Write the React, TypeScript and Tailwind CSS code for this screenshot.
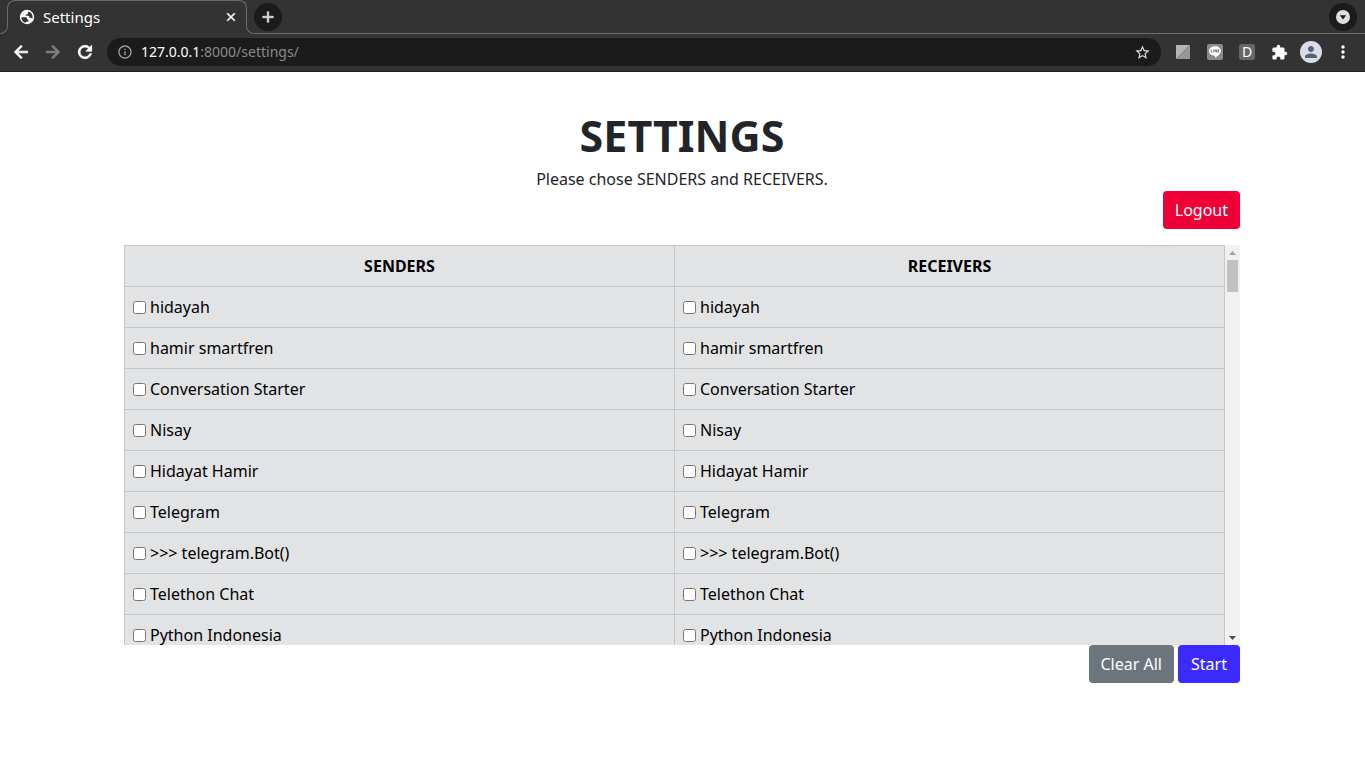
import { useRef, useState } from "react";
import type { ReactNode } from "react";
import {
  MdAdd,
  MdArrowBack,
  MdArrowForward,
  MdClose,
  MdExtension,
  MdInfoOutline,
  MdMoreVert,
  MdPerson,
  MdRefresh,
  MdStarBorder,
} from "react-icons/md";

const CONTACTS = [
  "hidayah",
  "hamir smartfren",
  "Conversation Starter",
  "Nisay",
  "Hidayat Hamir",
  "Telegram",
  ">>> telegram.Bot()",
  "Telethon Chat",
  "Python Indonesia",
];

function GlobeIcon() {
  return (
    <svg viewBox="0 0 16 16" className="size-4 shrink-0" aria-hidden="true">
      <circle cx="8" cy="8" r="7.2" fill="#fff" />
      <path
        d="M2.300 8.200h4.100c1.200 0 1.700.7 1.700 1.700v.6h1.300v1.400c0 .5-.3.8-.8.8H6.900v1.100C4.300 13.300 2.400 11 2.300 8.200zM9.500 2.500c2.500.8 4.100 3 4.100 5.500 0 .8-.2 1.500-.5 2.200-.4-.9-1-1.400-1.900-1.400h-.9V7.600c0-.5-.3-.8-.8-.8H6.700V5.500h1.200c.6 0 .9-.3.900-.8V3.800c.4-.2.700-.7.700-1.300z"
        fill="#333"
      />
    </svg>
  );
}

function TabSearchIcon() {
  return (
    <svg viewBox="0 0 14 14" className="size-[14px]" aria-hidden="true">
      <circle cx="7" cy="7" r="7" fill="#dedede" />
      <path d="M3.800 5.200h6.400L7 9.400z" fill="#1b1b1b" />
    </svg>
  );
}

function LineIcon() {
  return (
    <svg viewBox="0 0 16 16" className="size-4" aria-hidden="true">
      <rect width="16" height="16" rx="2" fill="#8b8b8b" />
      <path
        d="M8 2.200c3.400 0 6 2.100 6 4.800 0 2.300-2.600 4.600-6 6.800v-2.100C4.600 11.700 2 9.700 2 7s2.600-4.800 6-4.800z"
        fill="#fff"
      />
      <path
        d="M4.200 5.500v2.700h1.300M6.700 5.500v2.700M8 8.200V5.500l1.500 2.700V5.500M12.200 5.700h-1.300v2.500h1.300M10.900 7h1.200"
        stroke="#777"
        strokeWidth=".9"
        fill="none"
      />
    </svg>
  );
}

function IconButton({ label, children }: { label: string; children: ReactNode }) {
  return (
    <button type="button" aria-label={label} className="flex size-8 shrink-0 items-center justify-center">
      {children}
    </button>
  );
}

function BrowserBar() {
  return (
    <header className="border-b border-[#211f20] bg-[#333333] pb-px font-['Noto_Sans','Open_Sans',sans-serif] text-white">
      <div className="flex h-[34px]">
        <span className="h-2 w-2 shrink-0 self-end rounded-br-lg border-r border-b border-[#6b6b6b]" />
        <div className="-ml-px h-[26px] w-60 shrink-0 rounded-t-lg border-x border-t border-[#6b6b6b]">
          <div className="flex h-8 items-center gap-2 pr-2 pl-[11px]">
            <GlobeIcon />
            <span className="flex-1 text-[15px] leading-5">Settings</span>
            <button type="button" aria-label="Close tab">
              <MdClose className="size-[14px] stroke-current stroke-1 [&>path:first-child]:stroke-none" />
            </button>
          </div>
        </div>
        <div className="relative -ml-px flex flex-1 items-center justify-between px-2">
          <span className="absolute inset-x-0 bottom-0 h-2 rounded-bl-lg border-b border-l border-[#6b6b6b]" />
          <button
            type="button"
            aria-label="New tab"
            className="relative flex size-7 items-center justify-center rounded-full bg-[#1b1b1b]"
          >
            <MdAdd className="size-[18px] stroke-current stroke-1 text-[#dedede] [&>path:first-child]:stroke-none" />
          </button>
          <button
            type="button"
            aria-label="Search tabs"
            className="relative flex size-7 items-center justify-center rounded-full bg-[#1b1b1b]"
          >
            <TabSearchIcon />
          </button>
        </div>
      </div>
      <div className="flex h-9 items-center pr-1.5 pl-[5px]">
        <IconButton label="Back">
          <MdArrowBack className="size-5 stroke-current stroke-1 [&>path:first-child]:stroke-none" />
        </IconButton>
        <IconButton label="Forward">
          <MdArrowForward className="size-5 stroke-current stroke-1 text-[#858585] [&>path:first-child]:stroke-none" />
        </IconButton>
        <IconButton label="Reload">
          <MdRefresh className="size-5 stroke-current stroke-1 [&>path:first-child]:stroke-none" />
        </IconButton>
        <div className="mx-1.5 flex h-7 flex-1 items-center gap-2 rounded-full bg-[#1b1b1b] px-2.5">
          <MdInfoOutline className="size-4 shrink-0 text-[#9aa0a6]" />
          <p className="flex-1 text-sm text-[#8a8a8a]">
            <span className="text-white">127.0.0.1</span>:8000/settings/
          </p>
          <button type="button" aria-label="Bookmark this page">
            <MdStarBorder className="size-[17px] text-[#dedede]" />
          </button>
        </div>
        <IconButton label="Screenshot extension">
          <svg viewBox="0 0 14 14" className="size-[14px]" aria-hidden="true">
            <path d="M0 0h14L0 14z" fill="#b4b4b4" />
            <path d="M14 0v14H0z" fill="#979797" />
          </svg>
        </IconButton>
        <IconButton label="LINE">
          <LineIcon />
        </IconButton>
        <IconButton label="Dictionary extension">
          <span className="flex size-4 items-center justify-center rounded-xs bg-[#666666] text-sm leading-4">D</span>
        </IconButton>
        <IconButton label="Extensions">
          <MdExtension className="size-[17px]" />
        </IconButton>
        <IconButton label="Profile">
          <span className="flex size-[22px] items-center justify-center rounded-full bg-[#dadce6]">
            <MdPerson className="size-[18px] text-[#5a6078]" />
          </span>
        </IconButton>
        <IconButton label="Menu">
          <MdMoreVert className="size-5" />
        </IconButton>
      </div>
    </header>
  );
}

function ContactCell({ name, group }: { name: string; group: string }) {
  return (
    <td className="border border-[#c6c7c8] p-2">
      <label className="flex items-center gap-1">
        <input type="checkbox" name={group} value={name} className="size-[13px]" />
        {name}
      </label>
    </td>
  );
}

const THUMB_TRAVEL = 338;

function ContactTable() {
  const area = useRef<HTMLDivElement>(null);
  const [offset, setOffset] = useState(0);

  const onScroll = () => {
    const el = area.current;
    if (!el) return;
    const range = el.scrollHeight - el.clientHeight;
    setOffset(range > 0 ? (el.scrollTop / range) * THUMB_TRAVEL : 0);
  };
  const step = (amount: number) => area.current?.scrollBy({ top: amount });

  return (
    <div className="flex h-[400px]">
      <div ref={area} onScroll={onScroll} className="flex-1 overflow-y-auto [scrollbar-width:none]">
        <table className="w-full table-fixed border-collapse bg-[#e2e3e5] text-black">
          <thead>
            <tr>
              <th className="border border-[#c6c7c8] p-2 font-bold">SENDERS</th>
              <th className="border border-[#c6c7c8] p-2 font-bold">RECEIVERS</th>
            </tr>
          </thead>
          <tbody>
            {CONTACTS.map((name) => (
              <tr key={name}>
                <ContactCell name={name} group="senders" />
                <ContactCell name={name} group="receivers" />
              </tr>
            ))}
          </tbody>
        </table>
      </div>
      <div className="flex w-[15px] flex-col bg-[#f1f1f1]">
        <button
          type="button"
          aria-label="Scroll up"
          onClick={() => step(-41)}
          className="flex h-[15px] items-center justify-center"
        >
          <svg viewBox="0 0 7 4" className="h-1 w-[7px]" aria-hidden="true">
            <path d="M0 4 3.500 0 7 4z" fill="#a3a3a3" />
          </svg>
        </button>
        <div className="flex-1 px-0.5">
          <div className="h-8 bg-[#c1c1c1]" style={{ marginTop: offset }} />
        </div>
        <button
          type="button"
          aria-label="Scroll down"
          onClick={() => step(41)}
          className="flex h-[15px] items-center justify-center"
        >
          <svg viewBox="0 0 7 4" className="h-1 w-[7px]" aria-hidden="true">
            <path d="M0 0h7L3.500 4z" fill="#505050" />
          </svg>
        </button>
      </div>
    </div>
  );
}

export default function App() {
  return (
    <div className="min-h-screen bg-white">
      <BrowserBar />
      <main className="mx-auto max-w-[1141px] pt-9 pr-[13px] pl-3 font-['Noto_Sans','Open_Sans',sans-serif] text-base text-[#212529]">
        <h1 className="text-center text-[43px] leading-14 font-bold">SETTINGS</h1>
        <p className="pt-[3px] text-center">Please chose SENDERS and RECEIVERS.</p>
        <div className="flex justify-end pb-4">
          <button type="button" className="h-[38px] rounded bg-[#ef0037] px-3 text-white">
            Logout
          </button>
        </div>
        <ContactTable />
        <div className="flex justify-end gap-1">
          <button type="button" className="h-[38px] min-w-[62px] rounded bg-[#6c757d] px-3 text-white">
            Clear All
          </button>
          <button type="button" className="h-[38px] min-w-[62px] rounded bg-[#3b2bff] px-3 text-white">
            Start
          </button>
        </div>
      </main>
    </div>
  );
}
